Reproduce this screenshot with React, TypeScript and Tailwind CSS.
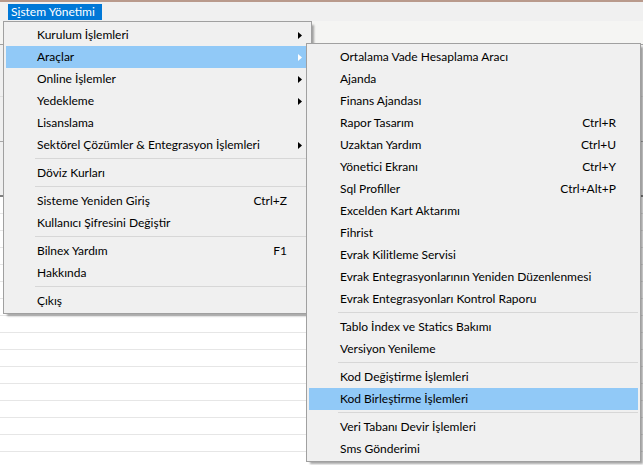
import clsx from 'clsx';

type Item =
	| { sep: true }
	| { label: string; shortcut?: string; sub?: boolean; active?: boolean };

const mainItems: Item[] = [
	{ label: 'Kurulum İşlemleri', sub: true },
	{ label: 'Araçlar', sub: true, active: true },
	{ label: 'Online İşlemler', sub: true },
	{ label: 'Yedekleme', sub: true },
	{ label: 'Lisanslama' },
	{ label: 'Sektörel Çözümler & Entegrasyon İşlemleri', sub: true },
	{ sep: true },
	{ label: 'Döviz Kurları' },
	{ sep: true },
	{ label: 'Sisteme Yeniden Giriş', shortcut: 'Ctrl+Z' },
	{ label: 'Kullanıcı Şifresini Değiştir' },
	{ sep: true },
	{ label: 'Bilnex Yardım', shortcut: 'F1' },
	{ label: 'Hakkında' },
	{ sep: true },
	{ label: 'Çıkış' },
];

const toolItems: Item[] = [
	{ label: 'Ortalama Vade Hesaplama Aracı' },
	{ label: 'Ajanda' },
	{ label: 'Finans Ajandası' },
	{ label: 'Rapor Tasarım', shortcut: 'Ctrl+R' },
	{ label: 'Uzaktan Yardım', shortcut: 'Ctrl+U' },
	{ label: 'Yönetici Ekranı', shortcut: 'Ctrl+Y' },
	{ label: 'Sql Profiller', shortcut: 'Ctrl+Alt+P' },
	{ label: 'Excelden Kart Aktarımı' },
	{ label: 'Fihrist' },
	{ label: 'Evrak Kilitleme Servisi' },
	{ label: 'Evrak Entegrasyonlarının Yeniden Düzenlenmesi' },
	{ label: 'Evrak Entegrasyonları Kontrol Raporu' },
	{ sep: true },
	{ label: 'Tablo İndex ve Statics Bakımı' },
	{ label: 'Versiyon Yenileme' },
	{ sep: true },
	{ label: 'Kod Değiştirme İşlemleri' },
	{ label: 'Kod Birleştirme İşlemleri', active: true },
	{ sep: true },
	{ label: 'Veri Tabanı Devir İşlemleri' },
	{ label: 'Sms Gönderimi' },
];

const Arrow = ({ white }: { white?: boolean }) => (
	<svg width="4" height="7" viewBox="0 0 4 7">
		<path d="M0 0L4 3.5L0 7Z" fill={white ? '#fff' : '#000'} />
	</svg>
);

const Menu = ({ items, className }: { items: Item[]; className: string }) => (
	<div
		className={clsx(
			'absolute border border-[#a0a0a0] bg-[#f0f0f0] px-[2px] pt-[2px] pb-px text-[12px] text-black shadow-[3px_3px_2px_-1px_rgba(0,0,0,0.35)]',
			className,
		)}
	>
		{items.map((it, i) =>
			'sep' in it ? (
				<div key={i} className="h-[6px] pt-[2px] pl-[29px]">
					<div className="h-px bg-[#d7d7d7]" />
				</div>
			) : (
				<div
					key={i}
					className={clsx(
						'flex h-[22px] items-center pl-[31px]',
						it.active && 'bg-[#91c9f7]',
					)}
				>
					<span className="flex-1 whitespace-nowrap">{it.label}</span>
					{it.shortcut && <span className="whitespace-nowrap">{it.shortcut}</span>}
					<span className="flex w-[22px] justify-end pr-[7px]">
						{it.sub && <Arrow white={it.active} />}
					</span>
				</div>
			),
		)}
	</div>
);

export default function App() {
	return (
		<div className="relative h-[465px] w-[643px] overflow-hidden bg-white font-['Segoe_UI','Lato',sans-serif] text-[12px]">
			<div className="h-[2px] bg-[#b99a8c]" />
			<div className="flex h-[19px] items-start bg-[#f0f0f0] pl-[8px] pt-[2px]">
				<div className="flex h-[16px] w-[94px] items-center bg-[#0078d7] px-[3px] text-white">
					S<span className="underline">i</span>stem Yönetimi
				</div>
			</div>
			<div className="h-[24px] border-b border-[#a0a0a0] bg-[#f5f5f3]" />
			<div className="h-[52px] border-b border-[#e0e0e0] bg-[#f0f0f0]" />
			<div className="h-[45px] border-b border-[#a8a8a8] bg-[#f0f0f0]" />
			<div className="h-[55px] border-b-[2px] border-[#808080] bg-[#f0f0f0]" />
			<div className="flex flex-col">
				{Array.from({ length: 16 }).map((_, i) => (
					<div key={i} className="h-[17px] border-b border-[#e6e6e6]" />
				))}
			</div>
			<Menu items={mainItems} className="left-[3px] top-[21px] w-[309px]" />
			<Menu items={toolItems} className="left-[306px] top-[43px] w-[335px]" />
		</div>
	);
}
